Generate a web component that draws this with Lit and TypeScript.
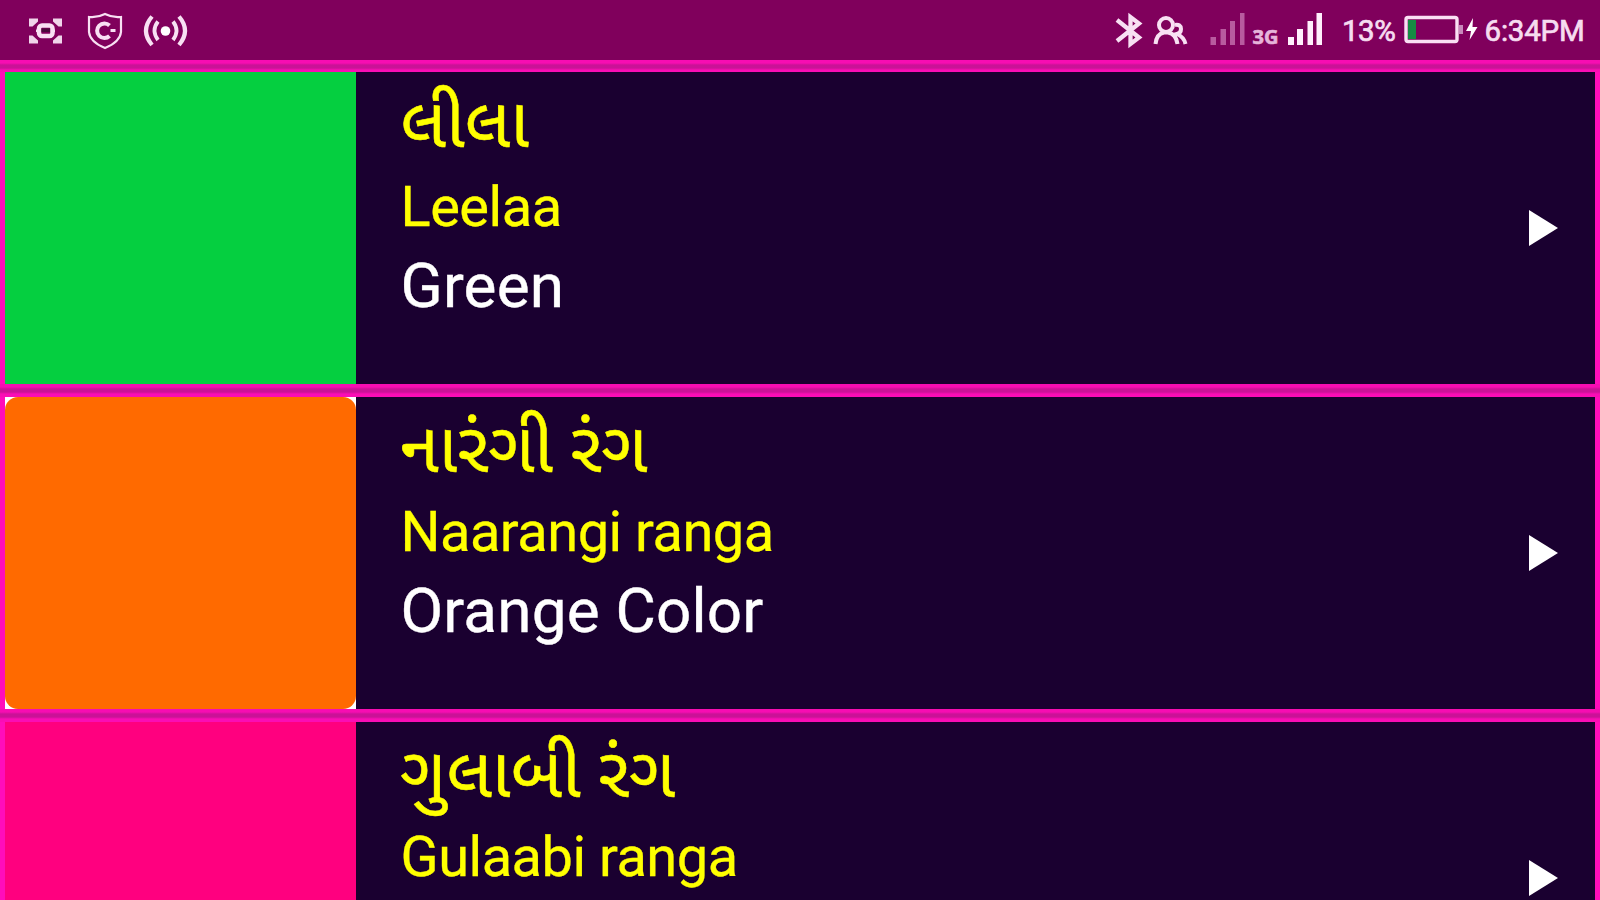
import { LitElement, html, css } from "lit";
import { customElement, property } from "lit/decorators.js";
import { classMap } from "lit/directives/class-map.js";

interface Entry { id: string; native: string; latin: string; english: string; }

const entries: Entry[] = [
  { id: "green", native: "લીલા", latin: "Leelaa", english: "Green" },
  { id: "orange", native: "નારંગી રંગ", latin: "Naarangi ranga", english: "Orange Color" },
  { id: "pink", native: "ગુલાબી રંગ", latin: "Gulaabi ranga", english: "" },
];

@customElement("status-bar")
class StatusBar extends LitElement {
  static styles = css`
    :host { display: flex; height: 60px; background: #80005c; color: #f6dcf0; font-family: Roboto, sans-serif; overflow: hidden; }
    svg { display: block; flex: none; }
    .left { width: 1100px; height: 60px; }
    .signals { width: 240px; height: 60px; }
    .percent { width: 60.5px; font-size: 29.5px; line-height: 63px; margin-left: 2px; letter-spacing: -0.5px; white-space: nowrap; -webkit-text-stroke: 0.7px currentColor; }
    .battery { width: 80px; height: 60px; }
    .time { margin-left: 2px; font-size: 29.5px; line-height: 63px; white-space: nowrap; letter-spacing: -0.2px; -webkit-text-stroke: 0.7px currentColor; }
    .net { font: 700 19px "Open Sans", sans-serif; }
  `;
  render() {
    return html`
      <svg class="left" viewBox="0 0 1100 60" fill="none" stroke="#f8e0f3">
        <g fill="#f0d4ea" stroke="none">
          <path d="M29 18.500h9v3l-5.500 5H29zM62 18.500h-9v3l5.500 5H62zM29 43.500h9v-3l-5.500-5H29zM62 43.500h-9v-3l5.500-5H62z"/>
        </g>
        <rect x="39" y="25.500" width="13.500" height="10.500" rx="3" stroke-width="4.500"/>
        <path stroke-width="2.500" d="M36 30.700h3M52 30.700h3"/>
        <rect x="41.500" y="28.500" width="8.500" height="3.500" fill="#4a0a3c" stroke="none"/>
        <path stroke-width="2.200" d="M105 14Q97 18 89 17v15q1 10 16 16q15-6 16-16V17q-8 1-16-3z"/>
        <path stroke-width="4" d="M109.500 25.500a7.300 7.300 0 1 0 0 10.500"/>
        <path stroke-width="3" d="M110.500 30.500h5"/>
        <circle cx="165.500" cy="31" r="4.800" fill="#fff" stroke="none"/>
        <path stroke-width="3.800" d="M158 21.500q-7 9 0 18.500M173 21.500q7 9 0 18.500"/>
        <path stroke-width="4.200" d="M152 16.500q-12 14 0 28.500M179 16.500q12 14 0 28.500"/>
      </svg>
      <svg class="signals" viewBox="1100 0 240 60" fill="none" stroke="#f8e0f3">
        <path stroke-width="4.300" d="M1117 20l22 17.500-8.500 6.500V17l8.500 6.500-22 17.500"/>
        <circle cx="1166" cy="25" r="7" stroke-width="4"/>
        <path stroke-width="4" d="M1155.500 44q1-10 8.500-11.500h4q8 1.500 9.500 11.500M1175 25q6-1 6 4 0 4-4 5 7 3 8.500 10"/>
        <g stroke="none" fill="#b85b9f">
          <rect x="1210.500" y="37" width="5.500" height="8"/><rect x="1220.500" y="29" width="5.500" height="16"/>
          <rect x="1230" y="21" width="5" height="24"/><rect x="1240" y="13" width="4.500" height="32"/>
        </g>
        <text class="net" x="1252.500" y="43.500" fill="#e6b4da" stroke="#e6b4da" stroke-width=".6" textLength="26" lengthAdjust="spacingAndGlyphs">3G</text>
        <g stroke="none" fill="#fff0fc">
          <rect x="1288" y="37" width="6" height="8"/><rect x="1297" y="29" width="6" height="16"/>
          <rect x="1307.500" y="21" width="5.500" height="24"/><rect x="1316.500" y="13" width="5.500" height="32"/>
        </g>
      </svg>
      <span class="percent">13%</span>
      <svg class="battery" viewBox="1402 0 80 60">
        <rect x="1405" y="17.500" width="51" height="24" rx="2" fill="none" stroke="#fadff4" stroke-width="3.400"/>
        <rect x="1407" y="20" width="8" height="19" fill="#168b43"/>
        <rect x="1458" y="25" width="4" height="9" fill="#c889bb"/>
        <path d="M1472 18l-7 13h5l-1.500 9 8-13h-5z" fill="#fff"/>
      </svg>
      <span class="time">6:34PM</span>`;
  }
}

@customElement("color-row")
class ColorRow extends LitElement {
  @property({ attribute: false }) entry!: Entry;
  static styles = css`
    :host { display: flex; height: 312px; background: #1a0030; }
    .swatch { width: 351px; flex: none; background: #fff; }
    .fill { height: 100%; }
    .green { background: #05cf40; }
    .orange { background: #ff6a00; border-radius: 13px; }
    .pink { background: #ff007f; }
    .words { flex: 1; padding-left: 44.5px; font-family: Roboto, "Noto Sans Gujarati", "Noto Sans", sans-serif; white-space: nowrap; color: #ff0; }
    .native { height: 98px; line-height: 102px; font-size: 70.2px; -webkit-text-stroke: 0.5px currentColor; }
    .latin { height: 74px; line-height: 75px; font-size: 56px; letter-spacing: -0.5px; -webkit-text-stroke: 0.3px currentColor; }
    .english { height: 84px; line-height: 84px; font-size: 62px; letter-spacing: 0.2px; color: #fff; -webkit-text-stroke: 0.4px currentColor; }
    .arrow { align-self: center; width: 30px; height: 38px; margin-right: 36px; }
  `;
  render() {
    const e = this.entry;
    return html`
      <div class="swatch"><div class=${classMap({ fill: true, [e.id]: true })}></div></div>
      <div class="words">
        <div class="native" lang="gu">${e.native}</div>
        <div class="latin">${e.latin}</div>
        <div class="english">${e.english}</div>
      </div>
      <svg class="arrow" viewBox="0 0 30 38"><path d="M0 1v36L29 19z" fill="#fff"/></svg>`;
  }
}

@customElement("app-root")
class AppRoot extends LitElement {
  static styles = css`
    :host { display: block; height: 900px; width: 1600px; overflow: hidden; background: #ff0dba; }
    .list { display: flex; flex-direction: column; }
    .line { height: 13px; flex: none; background: linear-gradient(#f70db2 0 3px, #ca1297 5px 8px, #fa0db5 10px); }
    .first { height: 12px; }
    color-row { margin: 0 5px; flex: none; }
  `;
  render() {
    return html`
      <status-bar></status-bar>
      <div class="list">
        ${entries.map((e, i) => html`
          <div class=${classMap({ line: true, first: i === 0 })}></div>
          <color-row .entry=${e}></color-row>`)}
      </div>`;
  }
}
